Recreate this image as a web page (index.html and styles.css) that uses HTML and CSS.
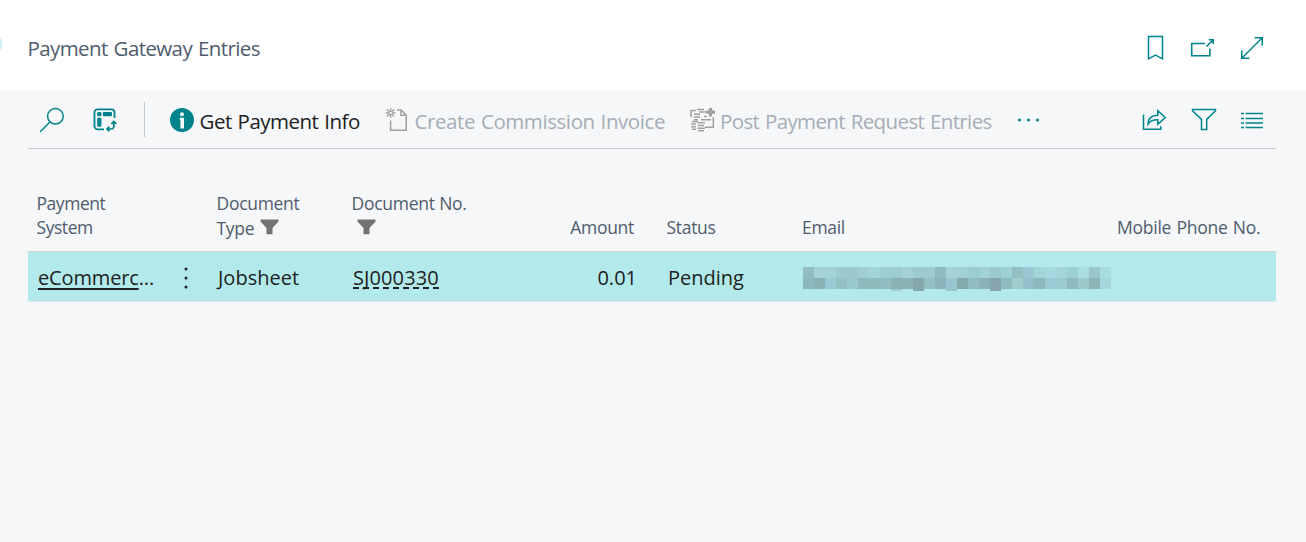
FILE: index.html
```html
<!DOCTYPE html>
<html lang="en">
<head>
<meta charset="utf-8">
<title>Payment Gateway Entries</title>
<link rel="stylesheet" href="styles.css">
</head>
<body>
<header class="page-head">
  <span class="edge-dot"></span>
  <h1 class="title">Payment Gateway Entries</h1>
  <div class="head-icons">
    <svg width="18" height="26" viewBox="0 0 18 26"><path d="M1.500 1.500h14v22.300l-7-3.700-7 3.700z"/></svg>
    <svg width="26" height="22" viewBox="0 0 26 22"><path d="M15 6.500H1.700v12.200h18.200V11.500M16.500 9.500l6-6M18.800 2.700h4.400v4.400" stroke-width="1.6"/></svg>
    <svg width="24" height="24" viewBox="0 0 24 24"><path d="M2 22L22 2M14.600 1.700h7.700v7.700M1.700 14.600v7.700h7.700"/></svg>
  </div>
</header>
<main class="page-body">
  <nav class="toolbar">
    <svg class="i-search" width="26" height="26" viewBox="0 0 26 26"><circle cx="16.4" cy="9.2" r="7.8"/><path d="M11 15L1.200 24.800"/></svg>
    <svg class="i-analyse" width="24" height="24" viewBox="0 0 24 24"><path d="M11 21.300H4.500a3 3 0 0 1-3-3v-14a3 3 0 0 1 3-3h14a3 3 0 0 1 3 3V10" stroke-width="1.8"/><g class="solid"><rect x="4.2" y="4" width="4.2" height="4.2" rx="1"/><rect x="9.8" y="4" width="9.2" height="4.2" rx="1"/><rect x="4.2" y="9.8" width="4.2" height="9" rx="1"/></g><path d="M14.500 21h3.800a2.500 2.500 0 0 0 2.500-2.500V14M18.300 16l2.500-2.500 2.500 2.500M16.400 18.600L14 21l2.400 2.400" stroke-width="1.7"/></svg>
    <span class="divider"></span>
    <button class="action get-info"><svg width="24" height="24" viewBox="0 0 24 24"><circle class="solid" cx="12" cy="12" r="12"/><circle cx="12" cy="6.3" r="2" class="white"/><path class="white" d="M9.700 9.800h4.300v10.700h-3.600v-9h-.7z"/></svg><span>Get Payment Info</span></button>
    <button class="action off create"><svg width="22" height="24" viewBox="0 0 22 24"><path d="M5.600 12.500v9.700h15.600V7l-5-5H12M16 2v5.200h5.200" stroke-width="1.5"/><path d="M5.600.3v3M5.600 6.700v3M.8 5h3M7.600 5h3M2 1.600l2 2M9.200 1.600l-2 2M2 8.400l2-2M9.200 8.400l-2-2" stroke-width="1.4"/><circle cx="5.6" cy="5" r="1.8" stroke-width="1.1"/></svg><span>Create Commission Invoice</span></button>
    <button class="action off post"><svg width="25" height="25" viewBox="0 0 25 25"><path d="M1 9V2.600h5M7 1.500h7M9 4h7M23.300 9v10.200H15M4 6.200h6M4 9h6M11 11.800h10M4 11.800h4M14 8.500h3" stroke-width="1.5"/><path d="M20.500 0v8.500M16.200 4.200H25" stroke-width="3.2"/><path d="M2 13.500h6M1 16h5M1 18.800h5M2 21.300h4M7.500 14.800h7.500M8 17.500h6M7.500 20.200h7.500M8 22.800h6" stroke-width="1.6"/></svg><span>Post Payment Request Entries</span></button>
    <svg class="more" width="24" height="4" viewBox="0 0 24 4"><g class="solid"><circle cx="2.5" cy="2" r="1.5"/><circle cx="11.5" cy="2" r="1.5"/><circle cx="20.5" cy="2" r="1.5"/></g></svg>
    <div class="tools">
      <svg width="25" height="22" viewBox="0 0 25 22"><path d="M1.500 5.500v14.800h17.300v-3M6 15c0-6 3.500-8.500 9.800-8.700V1.700l7.400 6.800-7.400 6.800v-4.600C11 10.500 8.200 11.600 6 15z"/></svg>
      <svg width="26" height="23" viewBox="0 0 26 23"><path d="M1.500 1.500h23v1.200l-8.800 8.700v10h-5.200v-10L1.500 2.700z"/></svg>
      <svg width="22" height="17" viewBox="0 0 22 17"><path d="M0 1.500h3M4.500 1.500H22M0 6.500h3M4.500 6.500H22M0 11h3M4.500 11H22M0 15.500h3M4.500 15.500H22"/></svg>
    </div>
  </nav>
  <section class="grid head-row">
    <div class="cell c-system">Payment<br>System</div>
    <div class="cell c-type">Document<br>Type <svg class="funnel" width="19" height="16" viewBox="0 0 19 16"><path d="M.5.5h18v2L12.500 9v6.300h-6V9L.5 2.500z"/></svg></div>
    <div class="cell c-no"><span class="doc-no">Document No.</span><svg class="funnel" width="19" height="16" viewBox="0 0 19 16"><path d="M.5.5h18v2L12.500 9v6.300h-6V9L.5 2.500z"/></svg></div>
    <div class="cell c-amount">Amount</div>
    <div class="cell c-status">Status</div>
    <div class="cell c-email">Email</div>
    <div class="cell c-phone">Mobile Phone No.</div>
  </section>
  <section class="grid data-row">
    <div class="cell c-system"><span class="ecom"><u>eCommerc</u>...</span><svg class="kebab" width="4" height="22" viewBox="0 0 4 22"><circle cx="2" cy="2" r="1.5"/><circle cx="2" cy="11" r="1.5"/><circle cx="2" cy="20" r="1.5"/></svg></div>
    <div class="cell c-type">Jobsheet</div>
    <div class="cell c-no"><span class="doc-link">SJ000330</span></div>
    <div class="cell c-amount">0.01</div>
    <div class="cell c-status">Pending</div>
    <div class="cell c-email"><svg id="mosaic" width="308" height="24" viewBox="0 0 308 24" shape-rendering="crispEdges"></svg></div>
  </section>
</main>
<script src="mosaic.js"></script>
</body>
</html>
```
FILE: styles.css
```css
* { box-sizing: border-box; }
body { margin: 0; width: 1306px; height: 542px; overflow: hidden; background: #f5f7f9; font-family: "Open Sans", "Noto Sans", sans-serif; }
svg { display: block; flex: none; fill: none; stroke: #00838a; stroke-width: 1.5; }
.solid { fill: #00838a; stroke: none; }
.white { fill: #f5f7f9; stroke: none; }
.page-head { position: relative; display: flex; height: 91px; padding: 0 42px 0 27.500px; background: #fff; justify-content: space-between; overflow: hidden; }
.edge-dot { position: absolute; left: -24px; top: 31px; width: 26px; height: 26px; border-radius: 50%; background: #c9ecef; }
.title { margin: 0; padding-top: 34px; font-size: 20.500px; line-height: 28px; font-weight: 400; letter-spacing: -.6px; word-spacing: 1.2px; color: #505c6d; white-space: nowrap; }
.head-icons { display: flex; align-items: center; height: 96px; gap: 24px; }
.head-icons svg:first-child { margin-right: 1px; }
.page-body { padding: 0 30px 0 28px; }
.toolbar { display: flex; align-items: center; height: 58px; border-bottom: 1px solid #c6cacf; }
.i-search { margin-left: 11px; }
.i-analyse { margin-left: 28px; }
.divider { width: 1px; height: 35px; margin-left: 27px; background: #c2c7cc; }
.action { display: flex; align-items: center; flex: none; height: 34px; padding: 0; border: 0; background: none; font: 400 20.500px/28px "Open Sans", "Noto Sans", sans-serif; color: #212121; letter-spacing: -.5px; word-spacing: 1px; white-space: nowrap; }
.action span { padding-top: 3px; }
.action.off { color: #a6adb6; }
.action.off svg { stroke: #a0a0a0; }
.get-info { width: 215px; margin-left: 25px; gap: 5.500px; }
.create { width: 305px; gap: 7.500px; letter-spacing: -.42px; }
.post { width: 327px; gap: 5px; letter-spacing: -.62px; }
.post svg { margin-top: 2px; }
.tools { display: flex; align-items: center; gap: 24px; margin-left: auto; margin-right: 13px; }
.tools svg:last-child { margin-top: 2px; }
.grid { display: grid; grid-template-columns: 180px 135px 150px 149px 151px 308px 175px; }
.cell { white-space: nowrap; }
.grid .c-status { margin-left: 16px; }
.head-row { height: 102px; align-items: end; padding-bottom: 12px; font-size: 17.500px; line-height: 24.500px; color: #505c6d; letter-spacing: -.3px; background: linear-gradient(#f2f3f5, #f2f3f5) 179px 0 / 1px 100% no-repeat; }
.head-row .cell { padding-left: 9px; }
.head-row .c-system { padding-left: 8.500px; letter-spacing: -.45px; line-height: 24px; }
.head-row .c-type { padding-left: 8.500px; margin-bottom: -1px; }
.head-row .c-no { padding-left: 8.500px; letter-spacing: -.25px; }
.head-row .c-amount, .data-row .c-amount { padding: 0; text-align: right; }
.head-row .c-amount { padding-right: 8px; }
.head-row .c-status { padding-left: 8.500px; }
.head-row .c-phone { padding-left: 16px; letter-spacing: -.25px; word-spacing: 1px; }
.head-row .c-type svg { display: inline-block; vertical-align: 0; margin-left: 1px; }
.doc-no { display: block; }
.head-row .c-no svg { margin: 4px 0 4px 5.500px; }
.funnel { fill: #737373; stroke: none; }
.data-row { height: 51px; align-items: center; padding-top: 2px; background: #b2eaec; border-top: 1px solid #cdd3d8; border-bottom: 1px solid #dfe5e8; font-size: 20px; line-height: 28px; color: #212121; }
.data-row .cell { padding-left: 10px; }
.data-row .c-system { display: flex; align-items: center; }
.kebab { margin-left: auto; margin-right: 20px; fill: #212121; stroke: none; }
.ecom { letter-spacing: -.15px; }
.ecom u { text-decoration-thickness: 2px; text-underline-offset: 3px; text-decoration-skip-ink: none; }
.doc-link { display: inline-block; line-height: 23px; letter-spacing: .1px; background: repeating-linear-gradient(90deg, #212121 0 6px, transparent 6px 10px) bottom / 100% 2px no-repeat; }
.data-row .c-amount { padding-right: 5px; }
.data-row .c-email { padding-top: 2px; }
```
FILE: mosaic.js
```js
// Redacted email: 11px blocks in three rows.
const rows = [
  { y: 0, h: 11, c: "93bdc1 a3d3d8 a3d3d8 9bcbcd 9dc8cf 9fcfd5 a2d5d7 9dced3 9accd2 a2d2d7 9bcbce 9bcbce 8fbac0 a3d3d9 a0d1d5 9bcdd0 a0d2d7 9cc9cf 9dd1d5 93bfc0 9bc8d0 a3d6da a5d9dd a2d4d8 9bcfd1 a9dfe3 98c6c9 a8dde0" },
  { y: 11, h: 11, c: "8cb8bc 89b1b4 9bcbd2 94c1c3 9ac9d0 90bbbd 90bbbd 8fbdc0 8ab1b3 8ab1b3 84a8ac 96c1c4 8cb3bb 99c6ce 84a9ad 90bcc2 8ab1b6 86a5ac 8ebbbe 9fcdcb 94bfc8 8db8bc 9bcad2 9bcbcd 90babf 9bcac9 8cb4b7 a5d6db" },
  { y: 22, h: 2, c: "- - - - - - - - 9dcbcf - 84a8ac - - 92c1c6 - - - 86a5ac" }
];
document.getElementById("mosaic").innerHTML = rows.map(r =>
  r.c.split(" ").map((c, i) => c === "-" ? "" :
    `<rect x="${i * 11}" y="${r.y}" width="11" height="${r.h}" fill="#${c}" stroke="none"/>`).join("")).join("");
```
